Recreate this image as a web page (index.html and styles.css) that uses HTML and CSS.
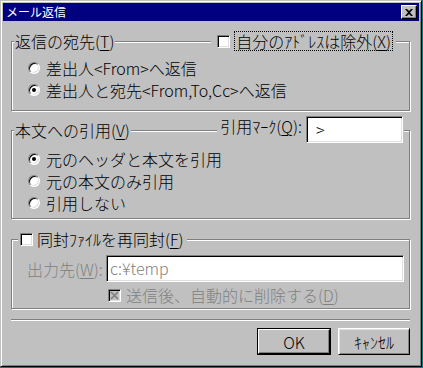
FILE: index.html
```html
<!DOCTYPE html>
<html lang="ja">
<head>
  <meta charset="UTF-8" />
  <title>メール返信</title>
  <link rel="stylesheet" href="styles.css">
</head>
<body>
<div class="window">
  <div class="titlebar">
    <span class="title">メール返信</span>
    <span class="close">
      <svg width="8" height="7" viewBox="0 0 8 7"><path d="M0 0h2l2 2 2-2h2L5 3.5 8 7H6L4 5 2 7H0l3-3.5z" fill="#000"/></svg>
    </span>
  </div>

  <div class="client">
    <div class="group group-reply">
      <div class="legend-row">
        <span class="legend">返信の宛先(<u>T</u>)</span>
        <span class="legend legend-check">
          <span class="checkbox"></span>
          <span class="focus">自分のｱﾄﾞﾚｽは除外(<u>X</u>)</span>
        </span>
      </div>
      <div class="options">
        <div class="radio-row"><span class="radio"></span><span>差出人&lt;From&gt;へ返信</span></div>
        <div class="radio-row"><span class="radio checked"></span><span>差出人と宛先&lt;From,To,Cc&gt;へ返信</span></div>
      </div>
    </div>

    <div class="group group-quote">
      <div class="legend-row">
        <span class="legend">本文への引用(<u>V</u>)</span>
        <span class="legend legend-mark">
          <span>引用ﾏｰｸ(<u>Q</u>):</span>
          <span class="textbox mark-box">&gt;</span>
        </span>
      </div>
      <div class="options">
        <div class="radio-row"><span class="radio checked"></span><span>元のヘッダと本文を引用</span></div>
        <div class="radio-row"><span class="radio"></span><span>元の本文のみ引用</span></div>
        <div class="radio-row"><span class="radio"></span><span>引用しない</span></div>
      </div>
    </div>

    <div class="group group-attach">
      <div class="legend-row">
        <span class="legend legend-check">
          <span class="checkbox"></span>
          <span>同封ﾌｧｲﾙを再同封(<u>F</u>)</span>
        </span>
      </div>
      <div class="field-row disabled">
        <span class="field-label">出力先(<u>W</u>):</span>
        <span class="textbox path-box">c:¥temp</span>
      </div>
      <div class="check-row disabled">
        <span class="checkbox checkbox-off">
          <svg width="9" height="9" viewBox="0 0 9 9"><path d="M1 1l7 7M8 1L1 8" stroke="#808080" stroke-width="1.6"/></svg>
        </span>
        <span>送信後、自動的に削除する(<u>D</u>)</span>
      </div>
    </div>

    <div class="separator"></div>

    <div class="buttons">
      <span class="button default"><span>OK</span></span>
      <span class="button">ｷｬﾝｾﾙ</span>
    </div>
  </div>
</div>
</body>
</html>
```

FILE: styles.css
```css
body {
  margin: 0;
  background: #008080;
  font-family: "Noto Sans CJK JP", sans-serif;
  font-size: 16px;
  font-weight: 300;
  color: #000;
}

u {
  text-underline-offset: 2px;
  text-decoration-thickness: 1px;
}

.window {
  box-sizing: border-box;
  width: 422px;
  height: 367px;
  padding: 2px;
  background: #c0c0c0;
  border: 1px solid;
  border-color: #c0c0c0 #000 #000 #c0c0c0;
  box-shadow: inset 1px 1px #fff, inset -1px -1px #808080;
}

.titlebar {
  height: 18px;
  padding: 0 2px 0 3px;
  background: #000080;
  color: #fff;
  font-size: 12px;
  font-weight: 400;
  line-height: 18px;
  display: flex;
  align-items: center;
  justify-content: space-between;
}

.close {
  box-sizing: border-box;
  width: 16px;
  height: 14px;
  background: #c0c0c0;
  border: 1px solid;
  border-color: #fff #000 #000 #fff;
  box-shadow: inset -1px -1px #808080;
  display: flex;
  align-items: center;
  justify-content: center;
}

.client {
  padding: 0 8px;
}

.group {
  box-sizing: border-box;
  width: 399px;
  border: 1px solid #808080;
  box-shadow: inset 1px 1px #fff, 1px 1px #fff;
}

.group-reply {
  height: 70px;
  margin-top: 20px;
}

.group-quote {
  height: 89px;
  margin-top: 19px;
}

.group-attach {
  height: 70px;
  margin-top: 20px;
}

.legend-row {
  height: 18px;
  margin-top: -10px;
  padding-left: 2px;
  display: flex;
  align-items: center;
  justify-content: space-between;
  line-height: 18px;
}

.legend {
  background: #c0c0c0;
  padding: 0 1px;
  white-space: nowrap;
}

.legend-check {
  display: flex;
  align-items: center;
  gap: 4px;
  padding: 0 3px 0 6px;
}

.group-reply .legend-check {
  margin-right: 13px;
}

.group-attach .legend-row {
  padding-left: 6px;
  justify-content: flex-start;
}

.group-attach .legend-check {
  padding-left: 2px;
}

.focus {
  padding: 0 1px;
  border: 1px dotted #000;
  line-height: 18px;
}

.legend-mark {
  display: flex;
  align-items: flex-start;
  gap: 4px;
  padding-left: 3px;
  margin-right: 5px;
}

.textbox {
  box-sizing: border-box;
  height: 27px;
  background: #fff;
  border: 1px solid;
  border-color: #808080 #fff #fff #808080;
  box-shadow: inset 1px 1px #000, inset -1px -1px #dfdfdf;
  padding: 0 0 0 3px;
  line-height: 25px;
}

.mark-box {
  width: 97px;
  margin-top: -1px;
  padding-left: 9px;
}

.options {
  padding: 7px 0 0 16px;
}

.group-quote .options {
  padding-top: 9px;
}

.radio-row {
  height: 22px;
  display: flex;
  align-items: center;
  gap: 6px;
}

.radio {
  box-sizing: border-box;
  width: 12px;
  height: 12px;
  border-radius: 50%;
  background: #fff;
  border: 1px solid;
  border-color: #808080 #fff #fff #808080;
  box-shadow: inset 1px 1px #000, inset -1px -1px #dfdfdf;
  display: flex;
  align-items: center;
  justify-content: center;
}

.radio.checked::after {
  content: "";
  width: 4px;
  height: 4px;
  border-radius: 50%;
  background: #000;
}

.checkbox {
  box-sizing: border-box;
  width: 13px;
  height: 13px;
  flex: none;
  background: #fff;
  border: 1px solid;
  border-color: #808080 #fff #fff #808080;
  box-shadow: inset 1px 1px #000, inset -1px -1px #dfdfdf;
  display: flex;
  align-items: center;
  justify-content: center;
}

.checkbox-off {
  background: #c0c0c0;
}

.disabled {
  color: #808080;
}

.field-row {
  margin-top: 7px;
  padding: 0 5px 0 15px;
  display: flex;
  align-items: center;
}

.field-label {
  width: 79px;
  flex: none;
}

.path-box {
  flex: 1;
}

.check-row {
  height: 22px;
  margin-top: 2px;
  padding-left: 96px;
  display: flex;
  align-items: center;
  gap: 5px;
}

.separator {
  width: 399px;
  margin-top: 10px;
  border-top: 1px solid #808080;
  border-bottom: 1px solid #fff;
}

.buttons {
  margin-top: 7px;
  padding-right: 1px;
  display: flex;
  justify-content: flex-end;
  gap: 7px;
}

.button {
  box-sizing: border-box;
  width: 72px;
  height: 27px;
  border: 1px solid;
  border-color: #fff #000 #000 #fff;
  box-shadow: inset 1px 1px #dfdfdf, inset -1px -1px #808080;
  display: flex;
  align-items: center;
  justify-content: center;
}

.button.default {
  width: 74px;
  border: 1px solid #000;
  box-shadow: none;
  padding: 0;
}

.button.default span {
  box-sizing: border-box;
  width: 100%;
  height: 100%;
  border: 1px solid;
  border-color: #fff #000 #000 #fff;
  box-shadow: inset -1px -1px #808080;
  display: flex;
  align-items: center;
  justify-content: center;
}
```
